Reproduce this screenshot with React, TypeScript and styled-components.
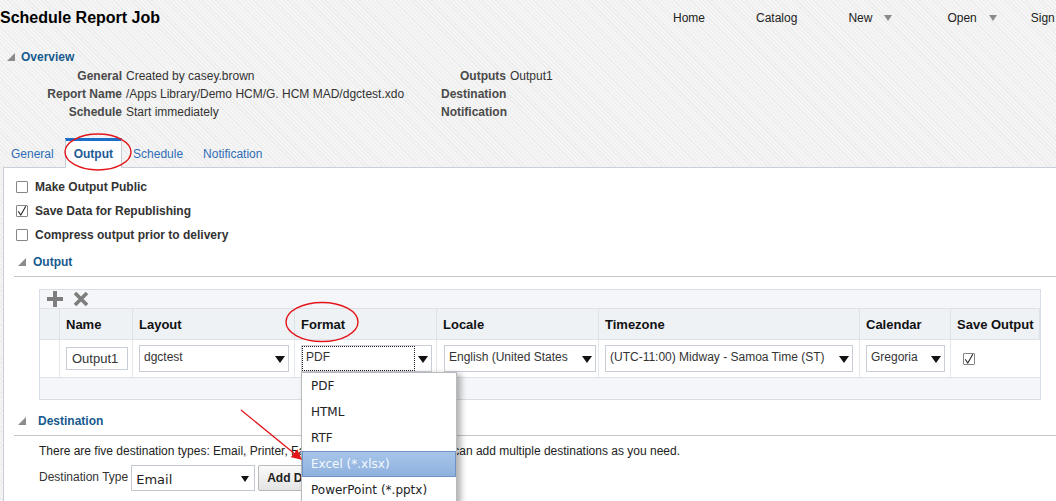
import React from "react";
import styled, { createGlobalStyle, css } from "styled-components";

const GlobalStyle = createGlobalStyle`
  html, body {
    margin: 0;
    padding: 0;
  }
  body {
    font-family: "Liberation Sans", Arial, sans-serif;
    font-size: 12px;
    color: #222;
  }
`;

const Page = styled.div`
  position: relative;
  width: 1056px;
  height: 501px;
  overflow: hidden;
  display: flex;
  flex-direction: column;
  background: repeating-linear-gradient(
    45deg,
    #f5f5f5 0px,
    #f5f5f5 2px,
    #ececec 2px,
    #ececec 3px
  );
`;

/* ---------- header ---------- */

const Header = styled.header`
  display: flex;
  align-items: center;
  height: 36px;
  flex-shrink: 0;
`;

const Title = styled.h1`
  margin: 0;
  width: 673px;
  flex-shrink: 0;
  font-size: 16px;
  font-weight: bold;
  color: #000;
  white-space: nowrap;
`;

const Nav = styled.nav`
  display: flex;
  align-items: center;
  white-space: nowrap;
`;

const NavItem = styled.span<{ $after: number }>`
  display: inline-flex;
  align-items: center;
  gap: 12px;
  margin-right: ${(p) => p.$after}px;
  color: #222;
`;

const NavArrow = styled.span`
  width: 0;
  height: 0;
  border-left: 4px solid transparent;
  border-right: 4px solid transparent;
  border-top: 6px solid #8a8a8a;
`;

/* ---------- overview ---------- */

const OverviewHeader = styled.div`
  display: flex;
  align-items: center;
  gap: 6px;
  height: 20px;
  margin-top: 11px;
  padding-left: 7px;
`;

const SectionTitle = styled.span`
  font-weight: bold;
  color: #175a8f;
`;

const SummaryGrid = styled.div`
  display: grid;
  grid-template-columns: 122px 311px 65px 1fr;
  column-gap: 4px;
  grid-auto-rows: 18px;
  align-items: center;
`;

const SummaryLabel = styled.div`
  text-align: right;
  font-weight: bold;
  color: #4a4a4a;
  white-space: nowrap;
`;

const SummaryValue = styled.div`
  color: #333;
  white-space: nowrap;
`;

/* ---------- tabs ---------- */

const TabBar = styled.div`
  display: flex;
  gap: 2px;
  height: 29px;
  margin-top: 17px;
  padding-left: 2px;
  flex-shrink: 0;
`;

const Tab = styled.div<{ $active?: boolean }>`
  position: relative;
  z-index: 1;
  display: flex;
  align-items: center;
  box-sizing: border-box;
  padding: 0 8px;
  border: 1px solid transparent;
  border-top: 3px solid transparent;
  border-bottom: none;
  color: #2f6db5;
  ${(p) =>
    p.$active &&
    css`
      background: #fff;
      border-color: #c9cfd6;
      border-top-color: #1b6fc8;
      margin-bottom: -1px;
      padding-bottom: 1px;
      font-weight: bold;
      color: #1c5a98;
    `}
`;

/* ---------- panel ---------- */

const Panel = styled.div`
  flex: 1;
  display: flex;
  flex-direction: column;
  margin-left: 3px;
  padding-top: 7px;
  background: #fff;
  border-top: 1px solid #c9cfd6;
  border-left: 1px solid #c9cfd6;
`;

const CheckRow = styled.label`
  display: flex;
  align-items: center;
  gap: 7px;
  height: 24px;
  padding-left: 12px;
  font-weight: bold;
  color: #333;
`;

const Box = styled.span`
  display: inline-flex;
  align-items: center;
  justify-content: center;
  width: 12px;
  height: 12px;
  box-sizing: border-box;
  border: 1px solid #858585;
  border-radius: 1px;
  background: #fff;
  flex-shrink: 0;
`;

const CheckBox = ({ checked }: { checked?: boolean }) => (
  <Box>
    {checked && (
      <svg width="10" height="10" viewBox="0 0 10 10">
        <path d="M1.2 5.2 L3.8 9 L8.8 0.2" fill="none" stroke="#2a2a2a" strokeWidth="1.1" />
      </svg>
    )}
  </Box>
);

const SectionHeader = styled.div<{ $textGap: number; $top: number }>`
  display: flex;
  align-items: center;
  gap: ${(p) => p.$textGap}px;
  height: 28px;
  margin: ${(p) => p.$top}px 0 0 10px;
  padding-left: 4px;
  border-bottom: 1px solid #c6c6c6;
  flex-shrink: 0;
`;

const Disclosure = () => (
  <svg width="8" height="8" viewBox="0 0 8 8">
    <polygon points="8,0 8,8 0,8" fill="#8c8c8c" />
  </svg>
);

/* ---------- output table ---------- */

const TablePanel = styled.div`
  margin: 12px 15px 0 35px;
  border: 1px solid #d8dee5;
  background: #f4f6f9;
  flex-shrink: 0;
`;

const Toolbar = styled.div`
  display: flex;
  align-items: center;
  gap: 10px;
  height: 18px;
  padding-left: 7px;
`;

const Grid = styled.div`
  display: grid;
  grid-template-columns: 20px 73px 162px 142px 162px 261px 91px 89px;
  border-top: 1px solid #dde2e8;
  border-bottom: 1px solid #dde2e8;
`;

const HeadCell = styled.div`
  display: flex;
  align-items: center;
  height: 31px;
  padding-left: 6px;
  box-sizing: border-box;
  background: #eff2f5;
  border-right: 1px solid #dde2e8;
  border-bottom: 1px solid #dde2e8;
  font-size: 13px;
  font-weight: bold;
  color: #111;
  white-space: nowrap;
  &:last-child {
    border-right: none;
  }
`;

const Cell = styled.div<{ $pad?: number }>`
  display: flex;
  align-items: center;
  height: 37px;
  padding-left: ${(p) => p.$pad ?? 6}px;
  box-sizing: border-box;
  background: #fff;
  border-right: 1px solid #e3e7ec;
  &:last-child {
    border-right: none;
  }
`;

const TableFoot = styled.div`
  height: 21px;
`;

const TextInput = styled.div`
  width: 62px;
  height: 23px;
  box-sizing: border-box;
  border: 1px solid #c8ced6;
  background: #fff;
  padding-left: 5px;
  display: flex;
  align-items: center;
  font-size: 13px;
  color: #333;
`;

const SelectBox = styled.div<{ $width: number }>`
  position: relative;
  display: flex;
  width: ${(p) => p.$width}px;
  height: 27px;
  box-sizing: border-box;
  border: 1px solid #c8ced6;
  background: #fff;
`;

const SelectText = styled.span<{ $focused?: boolean }>`
  flex: 1;
  padding: 4px 0 0 4px;
  line-height: 14px;
  white-space: nowrap;
  overflow: hidden;
  color: #333;
  ${(p) =>
    p.$focused &&
    css`
      outline: 1px dotted #222;
      outline-offset: -1px;
    `}
`;

const SelectArrow = styled.span`
  width: 16px;
  display: flex;
  justify-content: center;
  padding-top: 10px;
  box-sizing: border-box;
`;

const ArrowDown = ({ w = 10, h = 7 }: { w?: number; h?: number }) => (
  <svg width={w} height={h} viewBox={`0 0 ${w} ${h}`}>
    <polygon points={`0,0 ${w},0 ${w / 2},${h}`} fill="#111" />
  </svg>
);

const Select = ({
  width,
  value,
  focused,
  children,
}: {
  width: number;
  value: string;
  focused?: boolean;
  children?: React.ReactNode;
}) => (
  <SelectBox $width={width}>
    <SelectText $focused={focused}>{value}</SelectText>
    <SelectArrow>
      <ArrowDown />
    </SelectArrow>
    {children}
  </SelectBox>
);

const DropList = styled.ul`
  position: absolute;
  top: calc(100% + 1px);
  left: -1px;
  z-index: 5;
  width: 156px;
  margin: 0;
  padding: 0;
  list-style: none;
  box-sizing: border-box;
  border: 1px solid #b9b9b9;
  background: #fff;
  box-shadow: 4px 2px 6px rgba(0, 0, 0, 0.3);
  font-family: "DejaVu Sans", Verdana, sans-serif;
  font-size: 12px;
`;

const DropItem = styled.li<{ $hover?: boolean }>`
  display: flex;
  align-items: center;
  height: 26px;
  box-sizing: border-box;
  padding-left: 9px;
  color: #222;
  white-space: nowrap;
  ${(p) =>
    p.$hover &&
    css`
      background: linear-gradient(#a8c5e9, #8db1de);
      border: 1px solid #6c92c6;
      padding-left: 8px;
      color: #f4f8ff;
    `}
`;

/* ---------- destination ---------- */

const Description = styled.p`
  margin: 7px 0 0 35px;
  line-height: 16px;
  color: #222;
  white-space: nowrap;
`;

const DestRow = styled.div`
  display: flex;
  align-items: center;
  gap: 3px;
  margin-top: 6px;
  padding-left: 35px;
`;

const DestLabel = styled.span`
  color: #333;
  margin-top: -3px;
`;

const DestSelect = styled.div`
  display: flex;
  align-items: center;
  justify-content: space-between;
  width: 124px;
  height: 26px;
  box-sizing: border-box;
  padding: 2px 5px 0 4px;
  border: 1px solid #c3c9d0;
  background: #fff;
  font-family: "DejaVu Sans", Verdana, sans-serif;
  font-size: 13px;
  color: #222;
`;

const Button = styled.button`
  height: 26px;
  padding: 0 8px;
  border: 1px solid #b5b9be;
  border-radius: 2px;
  background: linear-gradient(#fafafa, #e4e4e4);
  font-family: "Liberation Sans", Arial, sans-serif;
  font-size: 12px;
  font-weight: bold;
  color: #222;
  white-space: nowrap;
`;

/* ---------- annotation overlay ---------- */

const Overlay = styled.svg`
  position: absolute;
  top: 0;
  left: 0;
  z-index: 10;
  pointer-events: none;
`;

const columns = ["", "Name", "Layout", "Format", "Locale", "Timezone", "Calendar", "Save Output"];
const formats = ["PDF", "HTML", "RTF", "Excel (*.xlsx)", "PowerPoint (*.pptx)", "MHTML", "CSV"];

export default function App() {
  return (
    <Page>
      <GlobalStyle />
      <Header>
        <Title>Schedule Report Job</Title>
        <Nav>
          <NavItem $after={51}>Home</NavItem>
          <NavItem $after={51}>Catalog</NavItem>
          <NavItem $after={55}>
            New <NavArrow />
          </NavItem>
          <NavItem $after={34}>
            Open <NavArrow />
          </NavItem>
          <NavItem $after={0}>Sign Out</NavItem>
        </Nav>
      </Header>

      <OverviewHeader>
        <Disclosure />
        <SectionTitle>Overview</SectionTitle>
      </OverviewHeader>
      <SummaryGrid>
        <SummaryLabel>General</SummaryLabel>
        <SummaryValue>Created by casey.brown</SummaryValue>
        <SummaryLabel>Outputs</SummaryLabel>
        <SummaryValue>Output1</SummaryValue>
        <SummaryLabel>Report Name</SummaryLabel>
        <SummaryValue>/Apps Library/Demo HCM/G. HCM MAD/dgctest.xdo</SummaryValue>
        <SummaryLabel>Destination</SummaryLabel>
        <SummaryValue />
        <SummaryLabel>Schedule</SummaryLabel>
        <SummaryValue>Start immediately</SummaryValue>
        <SummaryLabel>Notification</SummaryLabel>
        <SummaryValue />
      </SummaryGrid>

      <TabBar>
        <Tab>General</Tab>
        <Tab $active>Output</Tab>
        <Tab>Schedule</Tab>
        <Tab>Notification</Tab>
      </TabBar>

      <Panel>
        <CheckRow>
          <CheckBox />
          Make Output Public
        </CheckRow>
        <CheckRow>
          <CheckBox checked />
          Save Data for Republishing
        </CheckRow>
        <CheckRow>
          <CheckBox />
          Compress output prior to delivery
        </CheckRow>

        <SectionHeader $textGap={7} $top={1}>
          <Disclosure />
          <SectionTitle>Output</SectionTitle>
        </SectionHeader>

        <TablePanel>
          <Toolbar>
            <svg width="16" height="16" viewBox="0 0 16 16">
              <rect x="0" y="6" width="16" height="4" fill="#7d7d7d" />
              <rect x="6" y="0" width="4" height="16" fill="#7d7d7d" />
            </svg>
            <svg width="16" height="16" viewBox="0 0 16 16">
              <path d="M2 2 L14 14 M14 2 L2 14" stroke="#7d7d7d" strokeWidth="3.6" />
            </svg>
          </Toolbar>
          <Grid>
            {columns.map((c, i) => (
              <HeadCell key={i}>{c}</HeadCell>
            ))}
            <Cell />
            <Cell>
              <TextInput>Output1</TextInput>
            </Cell>
            <Cell>
              <Select width={150} value="dgctest" />
            </Cell>
            <Cell>
              <Select width={131} value="PDF" focused>
                <DropList>
                  {formats.map((f, i) => (
                    <DropItem key={f} $hover={i === 3}>
                      {f}
                    </DropItem>
                  ))}
                </DropList>
              </Select>
            </Cell>
            <Cell $pad={7}>
              <Select width={152} value="English (United States" />
            </Cell>
            <Cell>
              <Select width={248} value="(UTC-11:00) Midway - Samoa Time (ST)" />
            </Cell>
            <Cell>
              <Select width={79} value="Gregoria" />
            </Cell>
            <Cell $pad={12}>
              <CheckBox checked />
            </Cell>
          </Grid>
          <TableFoot />
        </TablePanel>

        <SectionHeader $textGap={12} $top={7}>
          <Disclosure />
          <SectionTitle>Destination</SectionTitle>
        </SectionHeader>
        <Description>
          There are five destination types: Email, Printer, Fax, FTP, and WebDAVs. You can add
          multiple destinations as you need.
        </Description>
        <DestRow>
          <DestLabel>Destination Type</DestLabel>
          <DestSelect>
            Email
            <ArrowDown w={8} h={6} />
          </DestSelect>
          <Button>Add Destination</Button>
        </DestRow>
      </Panel>

      <Overlay width="1056" height="501" viewBox="0 0 1056 501">
        <defs>
          <marker id="head" markerWidth="8" markerHeight="8" refX="7" refY="4" orient="auto">
            <path d="M0 0 L8 4 L0 8 Z" fill="#e3151a" />
          </marker>
        </defs>
        <ellipse cx="98" cy="152" rx="33" ry="18" fill="none" stroke="#e3151a" strokeWidth="1.4" />
        <ellipse cx="322" cy="322" rx="36" ry="19.5" fill="none" stroke="#e3151a" strokeWidth="1.4" />
        <line x1="241" y1="410" x2="301" y2="459" stroke="#e3151a" strokeWidth="1.3" markerEnd="url(#head)" />
      </Overlay>
    </Page>
  );
}
